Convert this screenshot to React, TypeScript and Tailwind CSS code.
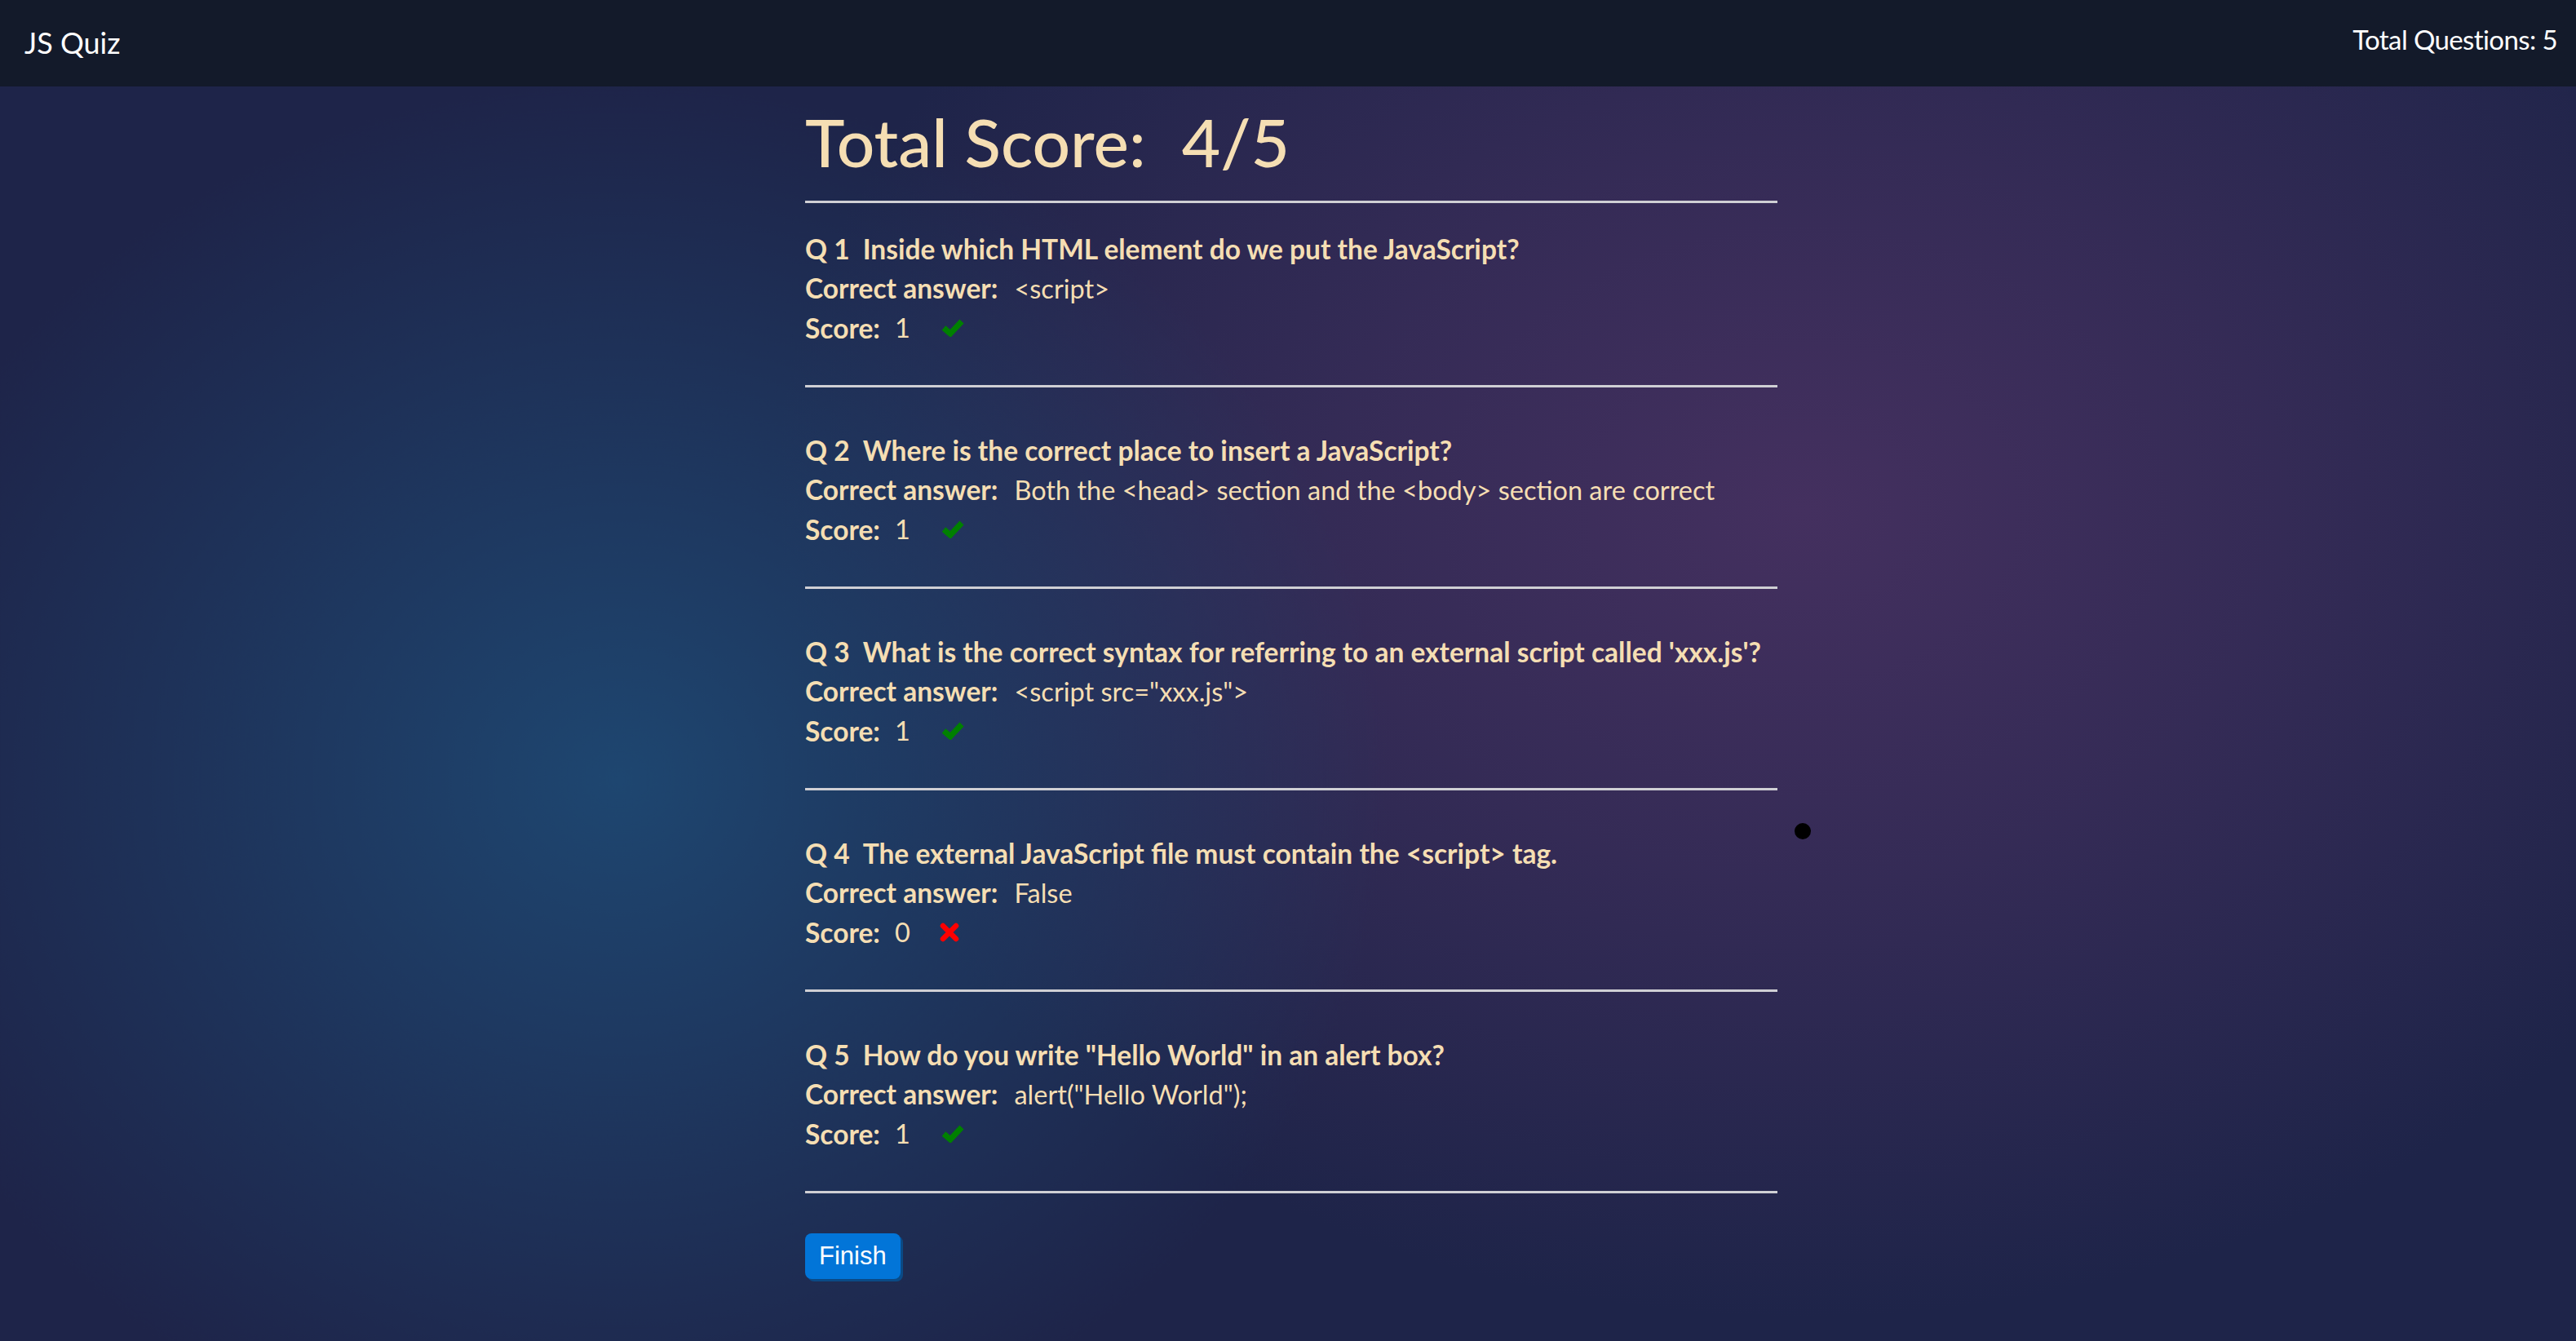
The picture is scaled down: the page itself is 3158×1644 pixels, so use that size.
import React from "react";

const questions = [
  {
    q: "Inside which HTML element do we put the JavaScript?",
    answer: "<script>",
    score: 1,
  },
  {
    q: "Where is the correct place to insert a JavaScript?",
    answer: "Both the <head> section and the <body> section are correct",
    score: 1,
  },
  {
    q: "What is the correct syntax for referring to an external script called 'xxx.js'?",
    answer: '<script src="xxx.js">',
    score: 1,
  },
  {
    q: "The external JavaScript file must contain the <script> tag.",
    answer: "False",
    score: 0,
  },
  {
    q: 'How do you write "Hello World" in an alert box?',
    answer: 'alert("Hello World");',
    score: 1,
  },
];

function Check() {
  return (
    <svg width="28" height="22" viewBox="0 0 28 22" className="ml-[38px]">
      <path d="M3 11 L11 18 L25 3" fill="none" stroke="#008000" strokeWidth="7" />
    </svg>
  );
}

function Cross() {
  return (
    <svg width="24" height="24" viewBox="0 0 24 24" className="ml-[36px]">
      <path d="M4 4 L20 20 M20 4 L4 20" fill="none" stroke="#ff0000" strokeWidth="6.5" strokeLinecap="round" />
    </svg>
  );
}

export default function App() {
  return (
    <div className="relative min-h-screen w-full bg-[#1e2449] bg-[radial-gradient(ellipse_30%_52%_at_24%_58%,#1e4670_0%,rgba(30,70,112,0.55)_45%,transparent_100%),radial-gradient(ellipse_40%_60%_at_70%_38%,#44305f_0%,rgba(68,48,95,0.6)_45%,transparent_100%)] font-['Lato','Noto_Sans',sans-serif]">
      {/* navbar */}
      <nav className="flex h-[106px] items-center justify-between bg-[#131a2a] pl-[30px] pr-[23px] text-white">
        <span className="-mt-[2px] text-[36px]">JS Quiz</span>
        <span className="-mt-[8px] text-[33px] tracking-[-0.6px]">Total Questions: 5</span>
      </nav>

      <main className="mx-auto w-[1200px] pl-[8px] text-[#f5deb3]">
        <h1 className="mt-[18px] text-[82px] font-medium leading-[1.2]">
          Total Score:<span className="ml-[44px]">4/5</span>
        </h1>
        <hr className="mt-[24px] border-t-[3px] border-[#cfcfd4]" />

        {questions.map((item, idx) => (
          <div key={idx}>
            <div className={`${idx === 0 ? "mt-[32px]" : "mt-[53px]"} mb-[46px] text-[32.5px] leading-[48px] whitespace-nowrap`}>
              <div className="text-[33.5px] font-bold">
                Q {idx + 1}
                <span className="ml-[16px]">{item.q}</span>
              </div>
              <div>
                <span className="text-[33.5px] font-bold">Correct answer:</span>
                <span className="ml-[20px]">{item.answer}</span>
              </div>
              <div className="flex items-center">
                <span className="text-[33.5px] font-bold">Score:</span>
                <span className="ml-[18px]">{item.score}</span>
                {item.score ? <Check /> : <Cross />}
              </div>
            </div>
            <hr className="border-t-[3px] border-[#cfcfd4]" />
          </div>
        ))}

        <button className="mt-[49px] mb-[80px] h-[56px] rounded-[8px] bg-[#0275d8] px-[17px] font-['Liberation_Sans',Arial,sans-serif] text-[31px] text-white shadow-[3px_3px_0_#0a4a86]">
          Finish
        </button>
      </main>

      {/* stray cursor dot */}
      <div className="absolute left-[2200px] top-[1009px] h-[20px] w-[20px] rounded-full bg-black" />
    </div>
  );
}
